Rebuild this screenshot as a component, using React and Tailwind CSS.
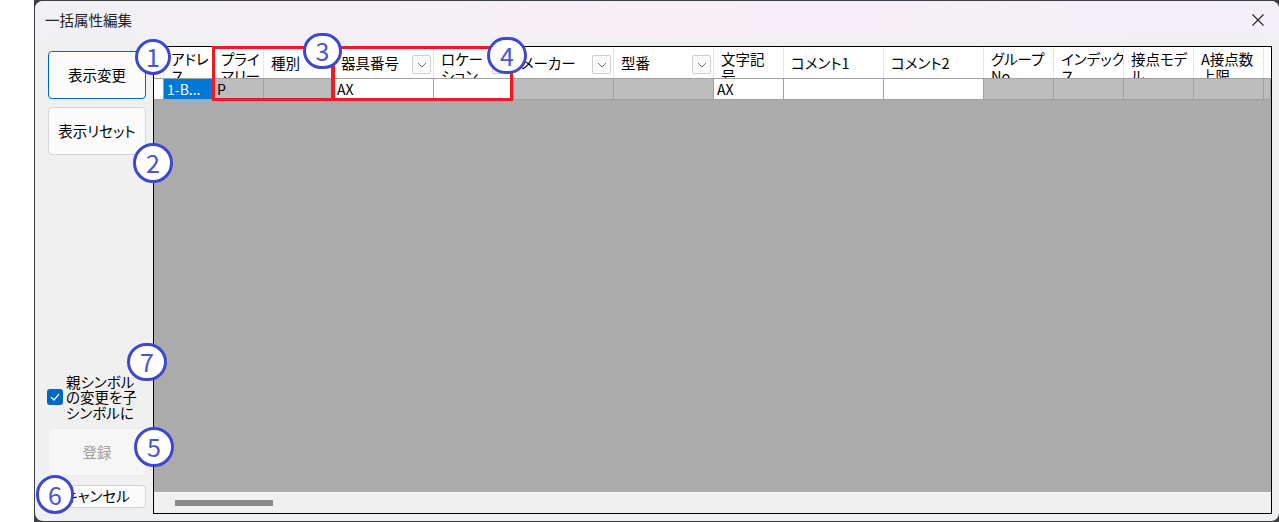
import React from 'react';

const columns = [
  { title: 'アドレ\nス', width: 'w-[50px]', value: '1-B...', kind: 'selected' },
  { title: 'プライ\nマリー', width: 'w-[50px]', value: 'P', kind: 'gray' },
  { title: '種別', width: 'w-[70px]', kind: 'gray' },
  { title: '器具番号', width: 'w-[100px]', value: 'AX', kind: 'white', drop: true },
  { title: 'ロケー\nション', width: 'w-[80px]', kind: 'white', drop: true },
  { title: 'メーカー', width: 'w-[100px]', kind: 'gray', drop: true },
  { title: '型番', width: 'w-[100px]', kind: 'gray', drop: true },
  { title: '文字記\n号', width: 'w-[70px]', value: 'AX', kind: 'white' },
  { title: 'コメント1', width: 'w-[100px]', kind: 'white' },
  { title: 'コメント2', width: 'w-[100px]', kind: 'white' },
  { title: 'グループ\nNo', width: 'w-[70px]', kind: 'gray' },
  { title: 'インデック\nス', width: 'w-[70px]', kind: 'gray' },
  { title: '接点モデ\nル', width: 'w-[70px]', kind: 'gray' },
  { title: 'A接点数\n上限', width: 'w-[70px]', kind: 'gray' },
  { title: '', width: 'w-[7px]', kind: 'gray' },
];

const cellBg = {
  selected: 'bg-[#0078d7] text-white',
  gray: 'bg-[#bdbdbd] text-black',
  white: 'bg-white text-black',
};

const Badge = ({ n, pos }) => (
  <div className={`absolute ${pos} flex items-center justify-center rounded-full border-[3px] border-[#3f48cc] bg-white text-[25px] text-[#4a55d0]`}>
    {n}
  </div>
);

const Chevron = () => (
  <svg width="10" height="6" viewBox="0 0 10 6" fill="none" stroke="#777" strokeWidth="1"><path d="M1 1l4 4 4-4" /></svg>
);

const HeaderCell = ({ col }) => {
  const multi = col.title.includes('\n');
  return (
    <div className={`relative flex h-[31px] shrink-0 overflow-hidden border-r border-[#e6e6e6] bg-white pl-[7px] text-[14.5px] leading-[17px] text-black whitespace-pre ${col.width} ${multi ? 'items-start pt-[3px]' : 'items-center'}`}>
      {col.title}
      {col.drop && (
        <span className="absolute right-[2px] top-[8px] flex h-[19px] w-[19px] items-center justify-center rounded-[2px] border border-[#cfcfcf] bg-[#fbfbfb]">
          <Chevron />
        </span>
      )}
    </div>
  );
};

export default function App() {
  return (
    <div className={`h-[522px] w-[1279px] overflow-hidden bg-white pl-[34px] font-['Noto_Sans_CJK_JP','Noto_Sans',sans-serif] [font-feature-settings:"palt"]`}>
      <div className="h-full w-[1245px] bg-[#3b3f46] pt-px pb-px pl-px">
        <div className="relative flex h-full w-full flex-col overflow-hidden rounded-[8px] bg-[#f0f0f0]">
          {/* Title bar */}
          <div className="flex h-[37px] shrink-0 items-center justify-between bg-gradient-to-r from-[#f1f0f5] via-[#f7eef6] to-[#f3eff6] pl-[10px] pr-[15px]">
            <span className="text-[14.5px] text-[#222]">一括属性編集</span>
            <svg width="12" height="12" viewBox="0 0 12 12" stroke="#222" strokeWidth="1.1"><path d="M0.5 0.5l11 11M11.5 0.5l-11 11" /></svg>
          </div>

          <div className="flex min-h-0 flex-1">
            {/* Side buttons */}
            <div className="flex w-[118px] shrink-0 flex-col pl-[13px] pt-[13px] pb-[13px]">
              <button className="h-[48px] w-[98px] rounded-[4px] border border-[#0067c0] bg-[#fbfbfb] text-[14.5px] text-black">表示変更</button>
              <button className="mt-[8px] h-[48px] w-[98px] rounded-[4px] border border-[#d4d4d4] bg-[#fbfbfb] text-[14.5px] text-black">表示リセット</button>
              <div className="mt-auto -ml-px flex items-center">
                <span className="flex h-[16px] w-[16px] shrink-0 items-center justify-center rounded-[3px] bg-[#0067c0]">
                  <svg width="10" height="8" viewBox="0 0 10 8" fill="none" stroke="white" strokeWidth="1.2"><path d="M1 4l3 3 5-6" /></svg>
                </span>
                <span className="ml-[3px] whitespace-nowrap text-[14.5px] leading-[15.5px] text-black">親シンボル<br />の変更を子<br />シンボルに</span>
              </div>
              <button className="mt-[8px] h-[48px] w-[98px] rounded-[4px] border border-[#ececec] bg-[#f6f6f6] text-[14.5px] text-[#9d9d9d]">登録</button>
              <button className="mt-[9px] h-[23px] w-[98px] rounded-[4px] border border-[#d4d4d4] bg-[#fbfbfb] text-[14.5px] leading-none text-black">キャンセル</button>
            </div>

            {/* Grid */}
            <div className="mt-[8px] mb-[7px] flex w-[1119px] min-w-0 shrink-0 flex-col overflow-hidden border border-black bg-[#ababab]">
              <div className="flex">
                <div className="h-[31px] w-[10px] shrink-0 border-r border-[#e6e6e6] bg-white" />
                {columns.map((col, i) => <HeaderCell key={i} col={col} />)}
              </div>
              <div className="flex h-[22px] shrink-0 border-y border-[#a0a0a0]">
                <div className="w-[10px] shrink-0 border-r border-[#a0a0a0] bg-white" />
                {columns.map((col, i) => (
                  <div key={i} className={`shrink-0 border-r border-[#a0a0a0] pl-[3px] text-[14px] leading-[20px] whitespace-nowrap ${col.width} ${cellBg[col.kind]}`}>
                    {col.value}
                  </div>
                ))}
              </div>
              <div className="flex-1" />
              <div className="flex h-[21px] shrink-0 items-center border-t border-[#f7f7f7] bg-[#f0f0f0] pl-[21px]">
                <div className="h-[6px] w-[98px] bg-[#8a8a8a]" />
              </div>
            </div>
          </div>

          {/* Callouts over the dialog */}
          <div className="absolute left-[177px] top-[45px] h-[55px] w-[122px] border-[3px] border-[#ed1c24]" />
          <div className="absolute left-[297px] top-[45px] h-[55px] w-[181px] border-[3px] border-[#ed1c24]" />
          <Badge n="1" pos="left-[100px] top-[38px] h-[36px] w-[36px]" />
          <Badge n="2" pos="left-[98px] top-[142px] h-[40px] w-[40px]" />
          <Badge n="3" pos="left-[268px] top-[32px] h-[36px] w-[39px]" />
          <Badge n="4" pos="left-[452px] top-[36px] h-[37px] w-[40px]" />
          <Badge n="5" pos="left-[99px] top-[426px] h-[40px] w-[40px]" />
          <Badge n="6" pos="left-[1px] top-[474px] h-[39px] w-[38px]" />
          <Badge n="7" pos="left-[92px] top-[342px] h-[38px] w-[40px]" />
        </div>
      </div>
    </div>
  );
}
